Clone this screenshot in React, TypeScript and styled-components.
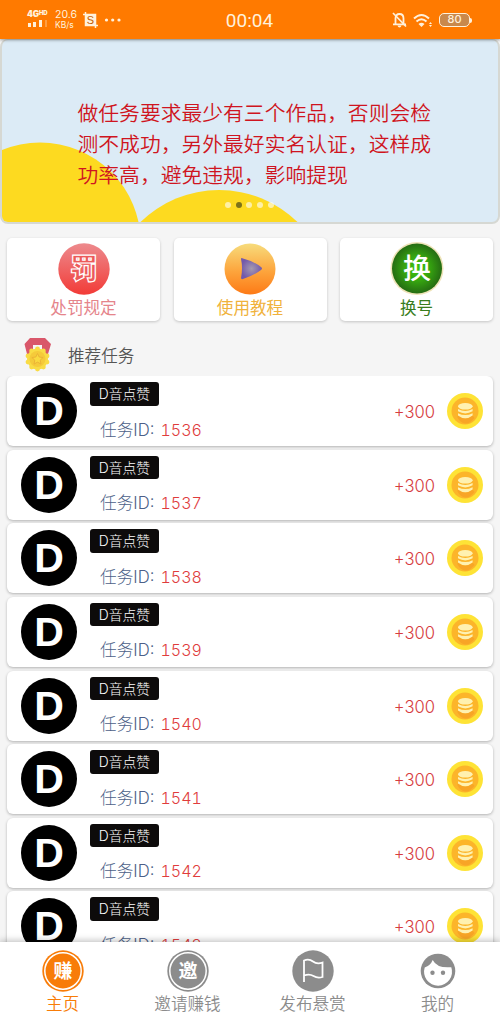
import React from "react";
import styled, { createGlobalStyle } from "styled-components";

const GlobalStyle = createGlobalStyle`
  * { box-sizing: border-box; }
  body {
    margin: 0;
    background: #f5f5f5;
    font-family: Inter, "Noto Sans CJK SC", sans-serif;
  }
`;

const Screen = styled.div`
  width: 500px;
  height: 1025px;
  display: flex;
  flex-direction: column;
  overflow: hidden;
  background: #f5f5f5;
`;

const StatusBar = styled.header`
  flex: none;
  height: 39px;
  display: grid;
  grid-template-columns: 1fr auto 1fr;
  align-items: center;
  padding: 0 28px 0 27px;
  background: #ff7a00;
  color: #fff1dc;
  box-shadow: 0 1px 3px rgba(0, 0, 0, 0.4);
  z-index: 1;
`;

const StatusGroup = styled.div<{ $end?: boolean }>`
  display: flex;
  align-items: center;
  justify-content: ${(p) => (p.$end ? "flex-end" : "flex-start")};
  gap: 6px;
`;

const Clock = styled.div`
  font: 400 19px/39px Roboto, sans-serif;
  padding-top: 1px;
`;

const Signal = styled.div`
  display: flex;
  flex-direction: column;
  gap: 1px;
  width: 22px;
  padding-bottom: 3px;
`;

const Network = styled.div`
  display: flex;
  font: 900 8.5px/9px Inter, sans-serif;
  letter-spacing: -0.2px;

  small { font-size: 6px; line-height: 6px; }
`;

const Speed = styled.div`
  font: 400 10.5px/10.5px Inter, sans-serif;
  width: 22px;
  white-space: nowrap;

  small { display: block; font-size: 8.5px; line-height: 9px; }
`;

const Battery = styled.div`
  display: flex;
  align-items: center;

  span {
    width: 31px;
    height: 14px;
    border: 1.5px solid #fff1dc;
    border-radius: 5px;
    background: #c9894c;
    font: 500 11px/11.5px Inter, sans-serif;
    text-align: center;
  }
  &::after {
    content: "";
    width: 2px;
    height: 5px;
    border-radius: 0 2px 2px 0;
    background: #fff1dc;
  }
`;

const Banner = styled.section`
  flex: none;
  position: relative;
  height: 185px;
  border: 2px solid #d6d8d3;
  border-top-width: 1px;
  border-radius: 8px;
  background: #dcebf6;
  overflow: hidden;
`;

const Hills = styled.svg`
  position: absolute;
  inset: 0;
`;

const Notice = styled.p`
  position: relative;
  margin: 56.5px 0 0 75.5px;
  width: 356px;
  font: 350 20.8px/31.2px "Noto Sans CJK SC", sans-serif;
  color: #cf1420;
`;

const Dots = styled.div`
  position: absolute;
  left: 223px;
  bottom: 14px;
  display: flex;
  gap: 4.7px;
`;

const Dot = styled.i<{ $active?: boolean }>`
  width: 6px;
  height: 6px;
  border-radius: 50%;
  background: ${(p) => (p.$active ? "#7d7219" : "rgba(255,255,255,0.6)")};
`;

const Shortcuts = styled.nav`
  flex: none;
  display: grid;
  grid-template-columns: repeat(3, 1fr);
  gap: 13.5px;
  padding: 14px 7px 0;
`;

const Shortcut = styled.a<{ $color: string }>`
  height: 83px;
  padding-top: 4px;
  display: flex;
  flex-direction: column;
  align-items: center;
  border-radius: 5px;
  background: #fff;
  box-shadow: 0 1px 3px rgba(0, 0, 0, 0.2);
  color: ${(p) => p.$color};
  font-size: 16.6px;
  line-height: 25px;

  svg { flex: none; }
`;

const SectionTitle = styled.h2`
  flex: none;
  height: 55px;
  margin: 0;
  padding: 13px 0 0 23px;
  display: flex;
  align-items: center;
  gap: 16px;
  font-size: 16.6px;
  font-weight: 350;
  color: #555;
`;

const TaskList = styled.main`
  flex: 1;
  min-height: 0;
  overflow: hidden;
  display: flex;
  flex-direction: column;
  gap: 3.65px;
  padding: 0 7px;
`;

const TaskCard = styled.article`
  flex: none;
  height: 70px;
  display: flex;
  align-items: center;
  padding: 0 10px 0 14px;
  border-radius: 6px;
  background: #fff;
  box-shadow: 0 1px 3px rgba(0, 0, 0, 0.28);
`;

const Avatar = styled.div`
  width: 56px;
  height: 56px;
  border-radius: 50%;
  background: #000;
  color: #fff;
  display: grid;
  place-items: center;
  font: 700 41px/56px "Liberation Sans", sans-serif;
`;

const TaskInfo = styled.div`
  flex: 1;
  align-self: stretch;
  padding: 6px 0 0 13px;
`;

const Tag = styled.div`
  width: 69px;
  height: 23.5px;
  border-radius: 3px;
  background: #0d0b0b;
  color: #fff;
  text-align: center;
  font: 300 13.8px/25px Inter, "Noto Sans CJK SC", sans-serif;
`;

const TaskId = styled.div`
  display: flex;
  margin: 12px 0 0 10px;
  font-size: 16.7px;
  font-weight: 300;
  line-height: 24px;
  color: #4c5f88;

  b {
    margin-left: 6px;
    font-size: 16px;
    font-weight: 300;
    font-variant-numeric: tabular-nums;
    color: #e03c3c;
  }
`;

const Reward = styled.div`
  margin: 2px 12px 0 0;
  font-size: 16.6px;
  font-weight: 300;
  color: #d63c40;
`;

const TabBar = styled.footer`
  flex: none;
  height: 83px;
  display: grid;
  grid-template-columns: repeat(4, 1fr);
  background: #fff;
  box-shadow: 0 -1px 7px rgba(0, 0, 0, 0.28);
  z-index: 1;
`;

const Tab = styled.a<{ $active?: boolean }>`
  padding-top: 8px;
  display: flex;
  flex-direction: column;
  align-items: center;
  color: ${(p) => (p.$active ? "#f87c08" : "#8c8c8c")};
  font-size: 16.6px;
  font-weight: 350;
  line-height: 24px;

  svg { flex: none; }
`;

const SignalIcon = () => (
  <svg width="21" height="7" fill="#fff1dc">
    <rect x="1" y="3" width="3" height="4" />
    <rect x="6" y="2" width="3" height="5" />
    <rect x="12" y="0" width="3" height="7" />
    <rect x="18" y="0" width="2" height="7" opacity=".3" />
  </svg>
);

const CropIcon = () => (
  <svg width="15" height="16" viewBox="0 0 15 16">
    <path d="M0 2.5H12.5V16M2.5 0V13.5H15" fill="none" stroke="#fff1dc" strokeWidth="1.5" />
    <rect x="3" y="3" width="9" height="10" fill="#fff1dc" />
    <text x="7.5" y="12" textAnchor="middle" fontFamily="Liberation Sans, sans-serif" fontSize="11" fill="#c45e00">S</text>
  </svg>
);

const MoreIcon = () => (
  <svg width="18" height="4" fill="#fff1dc">
    <circle cx="2.500" cy="2" r="1.600" /><circle cx="8.700" cy="2" r="1.600" /><circle cx="15" cy="2" r="1.600" />
  </svg>
);

const MutedBellIcon = () => (
  <svg width="15" height="16" viewBox="0 0 15 16" fill="none" stroke="#fff1dc">
    <path d="M3.500 12V6.500Q3.500 2 7.500 2T11.500 6.500V12M1 12.300H14" strokeWidth="1.800" />
    <path d="M5.500 13.500h4q-.5 2-2 2t-2-2z" fill="#fff1dc" stroke="none" />
    <path d="M1 1L14 14.500" strokeWidth="1.700" />
  </svg>
);

const WifiIcon = () => (
  <svg width="20" height="15" viewBox="0 0 20 15" fill="none" stroke="#fff1dc" strokeWidth="2">
    <path d="M1 5.500Q8.500-1.500 16 5.500M3.500 8.500Q8.500 4 13.500 8.500" />
    <path d="M5.500 11Q8.500 8.300 11.500 11L8.500 14Z" fill="#fff1dc" stroke="none" />
    <path d="M16 11l1.500-2 1.500 2zM16 12l1.500 2 1.500-2z" fill="#fff1dc" stroke="none" />
  </svg>
);

const PenaltyIcon = () => (
  <svg width="52" height="54" viewBox="0 0 52 54">
    <defs>
      <linearGradient id="red" x2="0" y2="1"><stop stopColor="#ed8a8d" /><stop offset="1" stopColor="#f23b37" /></linearGradient>
    </defs>
    <circle cx="26" cy="27" r="25.700" fill="url(#red)" />
    <text x="26" y="37" textAnchor="middle" fontFamily="Noto Sans CJK SC, sans-serif" fontWeight="900" fontSize="28" fill="#ec5a59" stroke="#fff" strokeWidth="1.200">罚</text>
  </svg>
);

const TutorialIcon = () => (
  <svg width="52" height="54" viewBox="0 0 52 54">
    <defs>
      <linearGradient id="orange" x2="0" y2="1"><stop stopColor="#f7dc7c" /><stop offset=".55" stopColor="#fda43c" /><stop offset="1" stopColor="#fd7a16" /></linearGradient>
      <radialGradient id="violet"><stop stopColor="#a69aae" /><stop offset="1" stopColor="#7259ac" /></radialGradient>
    </defs>
    <circle cx="26" cy="27" r="25.500" fill="url(#orange)" />
    <path d="M17 17Q17 15.500 19 16.500Q29 19 37 25Q39 26.500 37 28Q29 34 19 37Q17 37.500 17 36Q19 26 17 17Z" fill="url(#violet)" />
  </svg>
);

const SwapIcon = () => (
  <svg width="54" height="54" viewBox="0 0 54 54">
    <defs>
      <radialGradient id="green"><stop stopColor="#3fc30d" /><stop offset=".5" stopColor="#36a510" /><stop offset="1" stopColor="#256c13" /></radialGradient>
    </defs>
    <circle cx="27" cy="26.500" r="26.500" fill="#eee3b8" />
    <circle cx="27" cy="26.500" r="25" fill="url(#green)" />
    <text x="27" y="37" textAnchor="middle" fontFamily="Noto Sans CJK SC, sans-serif" fontWeight="500" fontSize="28" fill="#fff">换</text>
  </svg>
);

const medalLobes = Array.from({ length: 10 }, (_, i) => (i * Math.PI) / 5);

const MedalIcon = () => (
  <svg width="29" height="36" viewBox="0 0 29 36">
    <path d="M7 1H22L28 7 25 17H19V8H10V17H4L1.500 7Z" fill="#d9576a" />
    <g fill="#f9dc45">
      <circle cx="14.500" cy="22" r="10.500" />
      {medalLobes.map((a) => (
        <circle key={a} cx={14.5 + 10 * Math.sin(a)} cy={22 - 10 * Math.cos(a)} r="2.400" />
      ))}
    </g>
    <circle cx="14.500" cy="22" r="8" fill="#f5ca3a" />
    <path d="M14.500 16.500l1.700 3.500 3.900.5-2.900 2.700.8 3.900-3.500-2-3.500 2 .8-3.900-2.900-2.700 3.900-.5z" fill="#f9d93f" stroke="#ecb336" />
  </svg>
);

const CoinIcon = () => (
  <svg width="36" height="36" viewBox="0 0 36 36">
    <circle cx="18" cy="18" r="18" fill="#fee336" />
    <circle cx="18" cy="18" r="13.500" fill="#fcb52a" />
    <path d="M10.500 13v9.500q7.500 6 15 0l2 2.500q-5 6-9.500 5.500-5-1-7.500-6z" fill="#f8a526" />
    <g fill="#fff1b0">
      <ellipse cx="18.300" cy="13.300" rx="7.300" ry="3.300" />
      <path d="M11 16q7.300 3.800 14.600 0v2.300q-7.300 4.200-14.600 0zM11 20.200q7.300 3.800 14.600 0v2.300q-7.300 5.500-14.600 0z" />
    </g>
  </svg>
);

const SealIcon = ({ glyph }: { glyph: string }) => (
  <svg width="42" height="42" viewBox="0 0 42 42">
    <circle cx="21" cy="21" r="20.700" fill="currentColor" />
    <circle cx="21" cy="21" r="18.200" fill="none" stroke="#fff" strokeWidth="1.500" />
    <text x="21" y="28" textAnchor="middle" fontFamily="Noto Sans CJK SC, sans-serif" fontWeight="700" fontSize="19" fill="#fff">{glyph}</text>
  </svg>
);

const FlagIcon = () => (
  <svg width="42" height="42" viewBox="0 0 42 42">
    <circle cx="21" cy="21" r="20.700" fill="currentColor" />
    <path d="M12 32V10.500Q17 8.500 21 11.500T30.500 12.500V27Q25.500 28.500 21.500 26T12 25.500" fill="none" stroke="#fff" strokeWidth="1.800" />
  </svg>
);

const FaceIcon = () => (
  <svg width="42" height="42" viewBox="0 0 42 42">
    <circle cx="21" cy="21" r="17.300" fill="currentColor" />
    <path d="M15.700 10Q20 18.500 34.300 17.200A14 14 0 1 1 7.700 17.500Q13.500 15.500 15.700 10Z" fill="#fff" />
    <circle cx="15.500" cy="22.700" r="2.200" fill="currentColor" />
    <circle cx="26" cy="22.700" r="2.200" fill="currentColor" />
  </svg>
);

const shortcuts = [
  { label: "处罚规定", color: "#e5848b", icon: <PenaltyIcon /> },
  { label: "使用教程", color: "#f0b23c", icon: <TutorialIcon /> },
  { label: "换号", color: "#397d1c", icon: <SwapIcon /> },
];

const taskIds = [1536, 1537, 1538, 1539, 1540, 1541, 1542, 1543];

const tabs = [
  { label: "主页", icon: <SealIcon glyph="赚" />, active: true },
  { label: "邀请赚钱", icon: <SealIcon glyph="邀" /> },
  { label: "发布悬赏", icon: <FlagIcon /> },
  { label: "我的", icon: <FaceIcon /> },
];

export default function App() {
  return (
    <>
      <GlobalStyle />
      <Screen>
        <StatusBar>
          <StatusGroup>
            <Signal><Network>4G<small>HD</small></Network><SignalIcon /></Signal>
            <Speed>20.6<small>KB/s</small></Speed>
            <CropIcon />
            <MoreIcon />
          </StatusGroup>
          <Clock>00:04</Clock>
          <StatusGroup $end>
            <MutedBellIcon />
            <WifiIcon />
            <Battery><span>80</span></Battery>
          </StatusGroup>
        </StatusBar>
        <Banner>
          <Hills width="496" height="182" viewBox="2 40 496 182" fill="#fdda20">
            <circle cx="40" cy="243.300" r="100.800" />
            <circle cx="219" cy="302.300" r="112.300" />
          </Hills>
          <Notice>做任务要求最少有三个作品，否则会检测不成功，另外最好实名认证，这样成功率高，避免违规，影响提现</Notice>
          <Dots><Dot /><Dot $active /><Dot /><Dot /><Dot /></Dots>
        </Banner>
        <Shortcuts>
          {shortcuts.map((s) => (
            <Shortcut key={s.label} $color={s.color}>{s.icon}{s.label}</Shortcut>
          ))}
        </Shortcuts>
        <SectionTitle><MedalIcon />推荐任务</SectionTitle>
        <TaskList>
          {taskIds.map((id) => (
            <TaskCard key={id}>
              <Avatar>D</Avatar>
              <TaskInfo>
                <Tag>D音点赞</Tag>
                <TaskId>任务ID:<b>{id}</b></TaskId>
              </TaskInfo>
              <Reward>+300</Reward>
              <CoinIcon />
            </TaskCard>
          ))}
        </TaskList>
        <TabBar>
          {tabs.map((t) => (
            <Tab key={t.label} $active={t.active}>{t.icon}{t.label}</Tab>
          ))}
        </TabBar>
      </Screen>
    </>
  );
}
